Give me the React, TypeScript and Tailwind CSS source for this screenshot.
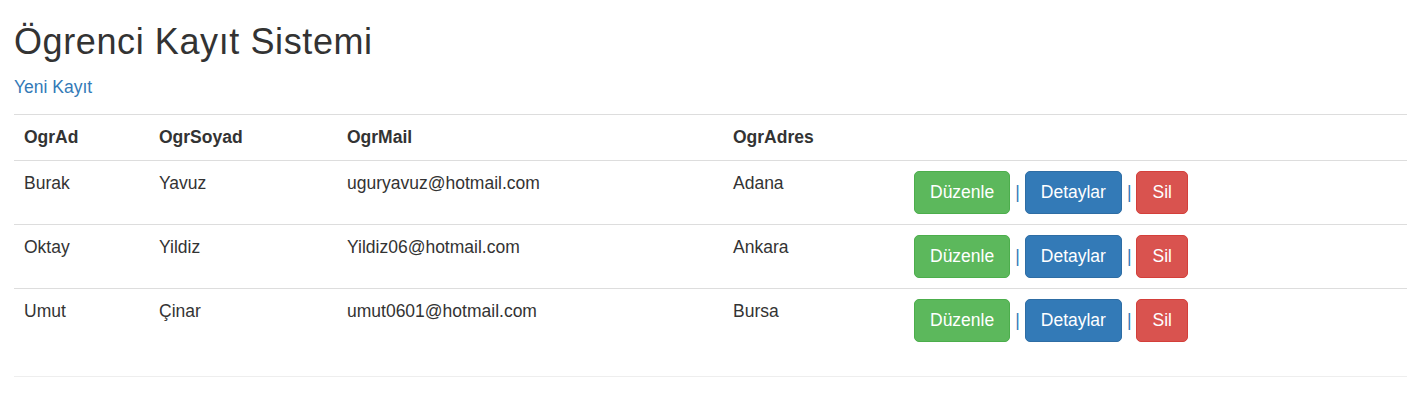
const students = [
  { ad: "Burak", soyad: "Yavuz", mail: "uguryavuz@hotmail.com", adres: "Adana" },
  { ad: "Oktay", soyad: "Yildiz", mail: "Yildiz06@hotmail.com", adres: "Ankara" },
  { ad: "Umut", soyad: "Çinar", mail: "umut0601@hotmail.com", adres: "Bursa" },
];

function Btn({ label, color }: { label: string; color: string }) {
  return (
    <a
      href="#"
      className={`inline-flex items-center justify-center h-[43px] px-[15px] rounded-[5px] border text-white align-top ${color}`}
    >
      {label}
    </a>
  );
}

export default function App() {
  return (
    <div
      className="pl-[14px] pt-[22px] text-[#333] text-[17.5px] leading-[25px] bg-white"
      style={{ fontFamily: '"Liberation Sans", Arial, sans-serif' }}
    >
      <h1 className="text-[36px] leading-[40px] tracking-[0.6px] font-normal">
        Ögrenci Kayıt Sistemi
      </h1>
      <p className="mt-[13px]">
        <a href="#" className="text-[#337ab7]">
          Yeni Kayıt
        </a>
      </p>
      <table className="mt-[14px] w-full table-fixed border-collapse">
        <colgroup>
          <col className="w-[135px]" />
          <col className="w-[188px]" />
          <col className="w-[386px]" />
          <col className="w-[181px]" />
          <col />
        </colgroup>
        <thead>
          <tr>
            <th className="text-left font-bold border-t border-[#ddd] pl-[10px] pt-[10px] pb-[10px]">OgrAd</th>
            <th className="text-left font-bold border-t border-[#ddd] pl-[10px] pt-[10px] pb-[10px]">OgrSoyad</th>
            <th className="text-left font-bold border-t border-[#ddd] pl-[10px] pt-[10px] pb-[10px]">OgrMail</th>
            <th className="text-left font-bold border-t border-[#ddd] pl-[10px] pt-[10px] pb-[10px]">OgrAdres</th>
            <th className="border-t border-[#ddd]"></th>
          </tr>
        </thead>
        <tbody>
          {students.map((s) => (
            <tr key={s.mail}>
              <td className="align-top border-t border-[#ddd] pl-[10px] pt-[10px] pb-[10px]">{s.ad}</td>
              <td className="align-top border-t border-[#ddd] pl-[10px] pt-[10px] pb-[10px]">{s.soyad}</td>
              <td className="align-top border-t border-[#ddd] pl-[10px] pt-[10px] pb-[10px]">{s.mail}</td>
              <td className="align-top border-t border-[#ddd] pl-[10px] pt-[10px] pb-[10px]">{s.adres}</td>
              <td className="align-top border-t border-[#ddd] pl-[10px] pt-[10px] pb-[10px] whitespace-nowrap">
                <div className="flex items-center">
                  <Btn label="Düzenle" color="bg-[#5cb85c] border-[#4cae4c]" />
                  <span className="text-[#337ab7] px-[5px]">|</span>
                  <Btn label="Detaylar" color="bg-[#337ab7] border-[#2e6da4]" />
                  <span className="text-[#337ab7] px-[5px]">|</span>
                  <Btn label="Sil" color="bg-[#d9534f] border-[#d43f3a]" />
                </div>
              </td>
            </tr>
          ))}
        </tbody>
      </table>
      <hr className="mt-[24px] border-0 border-t border-[#eee]" />
    </div>
  );
}
